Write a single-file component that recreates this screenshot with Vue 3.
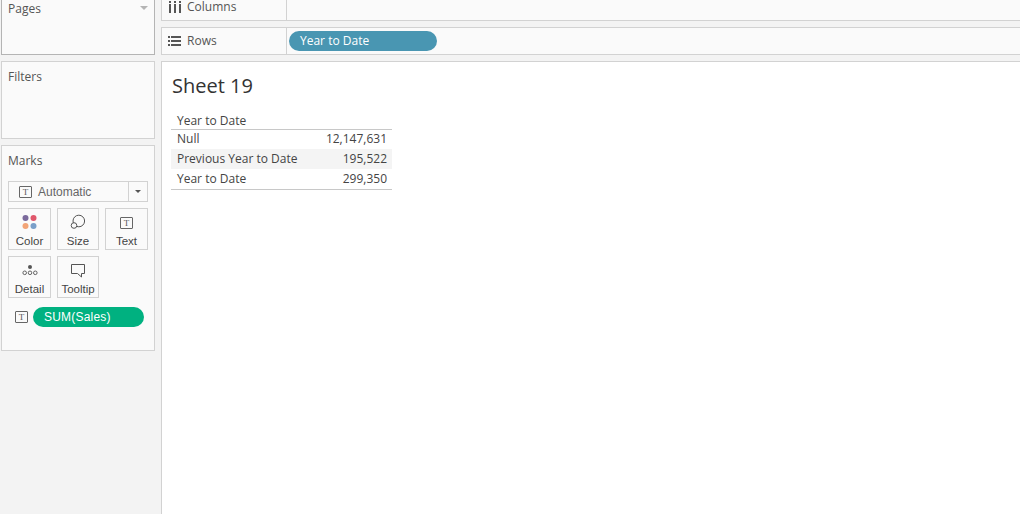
<script setup>
const rows = [
  { label: 'Null', value: '12,147,631' },
  { label: 'Previous Year to Date', value: '195,522', shaded: true },
  { label: 'Year to Date', value: '299,350' }
]
</script>

<template>
  <div class="app">
    <aside class="side">
      <section class="panel pages">
        <span class="title">Pages</span>
        <span class="caret"></span>
      </section>
      <section class="panel filters"><span class="title">Filters</span></section>
      <section class="panel marks">
        <span class="title">Marks</span>
        <div class="select">
          <div class="select-main">
            <span class="tbox">T</span>
            <span>Automatic</span>
          </div>
          <div class="select-arrow"><span class="mini-caret"></span></div>
        </div>
        <div class="cards">
          <div class="card">
            <svg width="16" height="16" viewBox="0 0 16 16" class="ico">
              <circle cx="3.500" cy="4" r="3" fill="#7b6a9c" />
              <circle cx="11.500" cy="4" r="3" fill="#e0576b" />
              <circle cx="3.500" cy="12" r="3" fill="#f2a477" />
              <circle cx="11.500" cy="12" r="3" fill="#7a9fc9" />
            </svg>
            <span>Color</span>
          </div>
          <div class="card">
            <svg width="16" height="16" viewBox="0 0 16 16" class="ico">
              <circle cx="8.800" cy="7" r="5.800" fill="none" stroke="#555" />
              <circle cx="4" cy="11.500" r="2.800" fill="#fafafa" stroke="#555" />
            </svg>
            <span>Size</span>
          </div>
          <div class="card">
            <span class="tbox big">T</span>
            <span>Text</span>
          </div>
          <div class="card">
            <svg width="16" height="16" viewBox="0 0 16 16" class="ico">
              <circle cx="8" cy="5" r="2" fill="#555" />
              <circle cx="2.700" cy="10.800" r="1.800" fill="none" stroke="#555" stroke-width=".9" />
              <circle cx="8" cy="10.800" r="1.800" fill="none" stroke="#555" stroke-width=".9" />
              <circle cx="13.300" cy="10.800" r="1.800" fill="none" stroke="#555" stroke-width=".9" />
            </svg>
            <span>Detail</span>
          </div>
          <div class="card">
            <svg width="16" height="16" viewBox="0 0 16 16" class="ico">
              <path d="M1.500 2.500h13v9h-3v3.500l-4-3.500h-6z" fill="none" stroke="#555" />
            </svg>
            <span>Tooltip</span>
          </div>
        </div>
        <div class="mark-row">
          <span class="tbox">T</span>
          <span class="pill green">SUM(Sales)</span>
        </div>
      </section>
    </aside>
    <main class="main">
      <div class="shelf columns">
        <div class="shelf-head">
          <svg width="14" height="12" viewBox="0 0 14 12" class="shelf-ico">
            <path d="M1 0h2v2H1zM6 0h2v2H6zM11 0h2v2h-2zM1 3h2v9H1zM6 3h2v9H6zM11 3h2v9h-2z" fill="#555" />
          </svg>
          <span class="shelf-label">Columns</span>
        </div>
      </div>
      <div class="shelf rows">
        <div class="shelf-head">
          <svg width="14" height="12" viewBox="0 0 14 12" class="shelf-ico">
            <path d="M0 1h2v2H0zM3 1h10v2H3zM0 5h2v2H0zM3 5h10v2H3zM0 9h2v2H0zM3 9h10v2H3z" fill="#555" />
          </svg>
          <span class="shelf-label">Rows</span>
        </div>
        <div class="shelf-body"><span class="pill blue">Year to Date</span></div>
      </div>
      <div class="view">
        <h1>Sheet 19</h1>
        <div class="table">
          <div class="thead">Year to Date</div>
          <div v-for="r in rows" :key="r.label" class="tr" :class="{ shaded: r.shaded }">
            <span>{{ r.label }}</span>
            <span>{{ r.value }}</span>
          </div>
        </div>
      </div>
    </main>
  </div>
</template>

<style>
html, body { margin: 0; background: #f3f3f3; }
</style>

<style scoped>
.app {
  width: 1020px;
  height: 514px;
  overflow: hidden;
  display: flex;
  background: #f3f3f3;
  font-family: "Open Sans", sans-serif;
  font-size: 12px;
  color: #555;
}
.side {
  width: 154px;
  margin-left: 1px;
  display: flex;
  flex-direction: column;
  gap: 6px;
  flex: none;
}
.panel {
  box-sizing: border-box;
  background: #fafafa;
  border: 1px solid #d2d2d2;
  padding: 0 6px;
  position: relative;
}
.title { display: block; line-height: 17px; }
.pages {
  height: 55px;
  border-color: #b4b4b4;
  border-top: 0;
}
.caret {
  position: absolute;
  right: 6px;
  top: 6px;
  border-left: 4px solid transparent;
  border-right: 4px solid transparent;
  border-top: 4px solid #b4b4b4;
}
.filters { height: 78px; padding-top: 6px; }
.marks { height: 206px; padding-top: 6px; }
.select {
  display: flex;
  height: 21px;
  width: 140px;
  box-sizing: border-box;
  margin-top: 12px;
  border: 1px solid #d2d2d2;
  font: 12px "Liberation Sans", sans-serif;
  color: #666;
}
.select-main {
  flex: 1;
  display: flex;
  align-items: center;
  gap: 6px;
  padding-left: 10px;
}
.select-arrow {
  width: 18px;
  border-left: 1px solid #d2d2d2;
  display: flex;
  align-items: center;
  justify-content: center;
}
.mini-caret {
  border-left: 3px solid transparent;
  border-right: 3px solid transparent;
  border-top: 3px solid #555;
}
.tbox {
  box-sizing: border-box;
  width: 13px;
  height: 12px;
  border: 1px solid #666;
  border-radius: 1px;
  display: inline-flex;
  align-items: center;
  justify-content: center;
  font: 9px "Liberation Serif", serif;
  color: #555;
}
.cards {
  display: grid;
  grid-template-columns: 43px 42px 43px;
  grid-auto-rows: 42px;
  column-gap: 6px;
  row-gap: 6px;
  margin-top: 6px;
}
.card {
  box-sizing: border-box;
  border: 1px solid #d2d2d2;
  font: 11.5px "Liberation Sans", sans-serif;
  color: #444;
  display: flex;
  flex-direction: column;
  align-items: center;
  white-space: nowrap;
  line-height: 14px;
}
.ico { margin-top: 5px; margin-bottom: 4px; height: 16px; flex: none; }
.tbox.big { margin-top: 8px; margin-bottom: 5px; }
.mark-row {
  display: flex;
  align-items: center;
  gap: 5px;
  margin-top: 9px;
  padding-left: 7px;
}
.pill {
  display: flex;
  align-items: center;
  height: 20px;
  border-radius: 10px;
  color: #fff;
  box-sizing: border-box;
}
.green {
  width: 111px;
  background: #00b180;
  padding-left: 11px;
  font: 12px "Liberation Sans", sans-serif;
  letter-spacing: .2px;
}
.blue {
  width: 148px;
  background: #4996b2;
  padding: 0 0 1px 11px;
}
.main {
  flex: 1;
  margin-left: 6px;
  display: flex;
  flex-direction: column;
  gap: 6px;
  min-width: 0;
}
.shelf {
  box-sizing: border-box;
  background: #fafafa;
  border: 1px solid #d2d2d2;
  border-right: 0;
  display: flex;
}
.columns { height: 21px; border-top: 0; }
.rows { height: 28px; }
.shelf-head {
  width: 125px;
  box-sizing: border-box;
  border-right: 1px solid #d2d2d2;
  display: flex;
  align-items: center;
  gap: 5px;
  padding-left: 6px;
  flex: none;
}
.shelf-label { line-height: 14px; }
.columns .shelf-head { padding-bottom: 7px; }
.shelf-ico { flex: none; }
.shelf-body {
  display: flex;
  align-items: center;
  padding-left: 2px;
}
.view {
  flex: 1;
  background: #fff;
  border: 1px solid #d2d2d2;
  border-right: 0;
  border-bottom: 0;
  padding-left: 9px;
}
h1 {
  margin: 0;
  padding: 10px 0 0 1px;
  font-weight: 400;
  font-size: 20px;
  line-height: 27px;
  color: #333;
}
.table {
  width: 221px;
  margin-top: 13px;
  border-bottom: 1px solid #c8c8c8;
  color: #444;
}
.thead {
  height: 17px;
  line-height: 18px;
  padding-left: 6px;
  border-bottom: 1px solid #c8c8c8;
}
.tr {
  display: flex;
  justify-content: space-between;
  height: 20px;
  line-height: 20px;
  padding: 0 5px 0 6px;
}
.tr:nth-child(2) { height: 19px; line-height: 18px; }
.shaded { background: #f4f4f4; }
</style>
